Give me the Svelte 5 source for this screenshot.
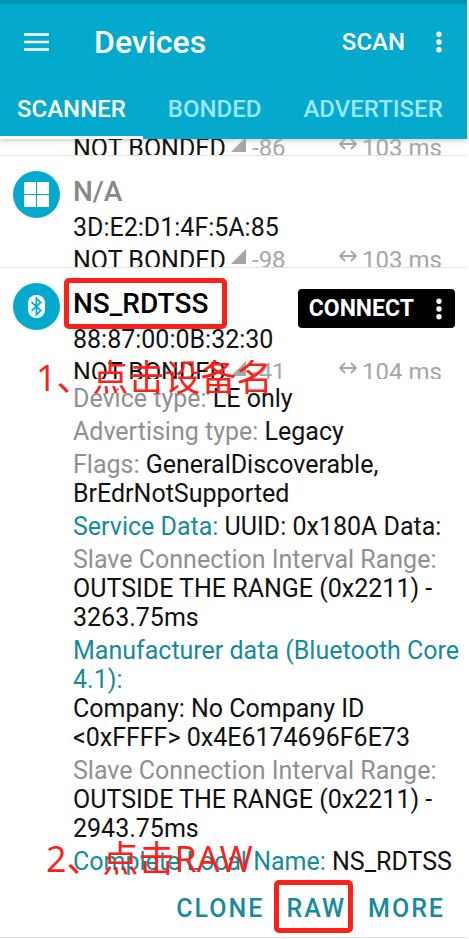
<script>
  const tabs = ['SCANNER', 'BONDED', 'ADVERTISER'];
  let activeTab = $state('SCANNER');

  const device = {
    name: 'NS_RDTSS',
    address: '88:87:00:0B:32:30',
    rssi: -41,
    interval: 104
  };

  const details = [
    { label: 'Device type:', value: 'LE only' },
    { label: 'Advertising type:', value: 'Legacy' },
    { label: 'Flags:', value: 'GeneralDiscoverable, BrEdrNotSupported' },
    { label: 'Service Data:', value: 'UUID: 0x180A Data:', link: true },
    { label: 'Slave Connection Interval Range:', value: 'OUTSIDE THE RANGE (0x2211) - 3263.75ms' },
    { label: 'Manufacturer data (Bluetooth Core 4.1):', value: 'Company: No Company ID <0xFFFF> 0x4E6174696F6E73', link: true, block: true },
    { label: 'Slave Connection Interval Range:', value: 'OUTSIDE THE RANGE (0x2211) - 2943.75ms' },
    { label: 'Complete Local Name:', value: 'NS_RDTSS', link: true }
  ];
</script>

{#snippet dots()}
  <svg class="dots" width="6" height="22" viewBox="0 0 6 22" aria-hidden="true">
    <circle cx="3" cy="3.2" r="2.7" />
    <circle cx="3" cy="11" r="2.7" />
    <circle cx="3" cy="18.8" r="2.7" />
  </svg>
{/snippet}

{#snippet meta(rssi, interval)}
  <div class="meta">
    <span>NOT BONDED</span>
    <span class="reading">
      <svg class="signal" width="16" height="16" viewBox="0 0 16 16" aria-hidden="true">
        <path d="M15 0v15H0z" />
      </svg>
      {rssi}
    </span>
    <span class="reading">
      <svg class="arrows" width="18" height="12" viewBox="0 0 18 12" aria-hidden="true">
        <path d="M1 6h16M6 1 1 6l5 5M12 1l5 5-5 5" />
      </svg>
      {interval} ms
    </span>
  </div>
{/snippet}

<div class="app">
  <header>
    <div class="toolbar">
      <button class="menu" aria-label="Open menu">
        <svg width="25" height="18" viewBox="0 0 25 18" aria-hidden="true">
          <path d="M0 1.5h25M0 9h25M0 16.5h25" />
        </svg>
      </button>
      <h1>Devices</h1>
      <button class="scan">SCAN</button>
      <button class="overflow" aria-label="More options">{@render dots()}</button>
    </div>
    <nav>
      {#each tabs as tab}
        <button class="tab" class:active={tab === activeTab} onclick={() => (activeTab = tab)}>{tab}</button>
      {/each}
    </nav>
  </header>

  <main>
    <section class="device scrolled">
      <div class="info">
        {@render meta(-86, 103)}
      </div>
    </section>

    <section class="device">
      <div class="avatar">
        <svg width="47" height="47" viewBox="0 0 47 47" aria-hidden="true">
          <path fill="#fff" d="M11 11h12v12H11zM24 11h12v12H24zM11 24h12v12H11zM24 24h12v12H24z" />
        </svg>
      </div>
      <div class="info">
        <h2 class="unknown">N/A</h2>
        <p class="address">3D:E2:D1:4F:5A:85</p>
        {@render meta(-98, 103)}
      </div>
    </section>

    <section class="device">
      <div class="avatar">
        <svg width="47" height="47" viewBox="0 0 47 47" aria-hidden="true">
          <rect x="15" y="12" width="17" height="23" rx="8" fill="#fff" />
          <path fill="none" stroke="#04a9ce" stroke-width="1.7" d="M18.5 19.2l9.2 8.4-4.3 4.2V15.2l4.3 4.2-9.2 8.4" />
        </svg>
      </div>
      <div class="info">
        <div class="title">
          <h2><span class="marked name-mark">{device.name}</span></h2>
          <button class="connect">CONNECT {@render dots()}</button>
        </div>
        <p class="address">{device.address}</p>
        {@render meta(device.rssi, device.interval)}
        <div class="details">
          {#each details as item}
            <p>
              <span class="label" class:link={item.link} class:block={item.block}>{item.label}</span>
              {item.value}
            </p>
          {/each}
        </div>
        <div class="actions">
          <button>CLONE</button>
          <button class="marked raw-mark">RAW</button>
          <button>MORE</button>
        </div>
      </div>
      <p class="note first">1、点击设备名</p>
      <p class="note second">2、点击RAW</p>
    </section>
  </main>
</div>

<style>
  :global(body) {
    margin: 0;
    background: #fff;
  }

  .app {
    padding-right: 2px;
    font-family: Roboto, "Noto Sans CJK SC", sans-serif;
    font-size: 25px;
    line-height: 29px;
    color: #111;
  }

  h1, h2, p {
    margin: 0;
    font-weight: 500;
  }

  button {
    border: 0;
    padding: 0;
    background: none;
    font: inherit;
    font-weight: 500;
    color: inherit;
    cursor: pointer;
  }

  svg {
    display: block;
  }

  header {
    position: relative;
    border-top: 4px solid #0092b3;
    background: #04a9ce;
    color: #fff;
    font-size: 24px;
    box-shadow: 0 2px 5px rgba(0, 0, 0, 0.2);
  }

  .toolbar {
    display: flex;
    align-items: center;
    height: 76px;
    padding: 0 25px 0 24px;
  }

  .menu path {
    stroke: #fff;
    stroke-width: 2.4;
  }

  h1 {
    flex: 1;
    margin-left: 45px;
    font-size: 32px;
    line-height: 38px;
  }

  .overflow {
    margin-left: 31px;
  }

  .dots {
    fill: #fff;
  }

  nav {
    display: flex;
    gap: 8px;
  }

  .tab {
    height: 59px;
    padding: 2px 17px 0;
    border-bottom: 3px solid transparent;
    color: #9be6fb;
  }

  .tab.active {
    border-color: #fff;
    color: #fff;
  }

  .device {
    position: relative;
    display: flex;
    gap: 13px;
    padding: 19px 7px 0 13px;
    border-bottom: 1px solid #e4e4e4;
  }

  /* row that is mostly hidden under the app bar */
  .scrolled {
    height: 16px;
    padding: 0 7px 0 73px;
    overflow: hidden;
    align-items: flex-end;
  }

  .avatar {
    flex: none;
    width: 47px;
    height: 47px;
    margin-top: -4px;
    border-radius: 50%;
    background: #04a9ce;
  }

  .info {
    flex: 1;
    min-width: 0;
  }

  h2 {
    font-size: 28px;
    line-height: 34px;
    color: #000;
  }

  .unknown {
    color: #888;
  }

  p {
    font-weight: 400;
  }

  .address {
    margin: 4px 0;
  }

  .title {
    display: flex;
    justify-content: space-between;
    align-items: flex-start;
    height: 34px;
    padding-right: 5px;
  }

  .connect {
    display: flex;
    align-items: center;
    gap: 22px;
    height: 39px;
    margin-top: 2px;
    padding: 0 13px 0 11px;
    border-radius: 4px;
    background: #000;
    color: #fff;
    font-size: 23px;
    font-weight: 700;
  }

  .meta {
    display: grid;
    grid-template-columns: 158px 108px 1fr;
    height: 21px;
    overflow: hidden;
  }

  .reading {
    display: flex;
    gap: 5px;
    font-size: 24px;
    color: #a6a6a6;
  }

  .signal {
    margin-top: 3px;
    fill: #a6a6a6;
  }

  .arrows {
    margin-top: 4px;
    fill: none;
    stroke: #a6a6a6;
    stroke-width: 1.8;
  }

  .details {
    display: grid;
    gap: 4px;
    margin-top: 5px;
  }

  .label {
    color: #909090;
  }

  .label.link {
    color: #158b9b;
  }

  .label.block {
    display: block;
  }

  .actions {
    display: flex;
    justify-content: flex-end;
    gap: 22px;
    padding: 18px 15px 14px 0;
    color: #158b9b;
  }

  .actions button {
    letter-spacing: 2px;
  }

  .marked {
    position: relative;
  }

  .marked::after {
    content: "";
    position: absolute;
    border: 5px solid #fb2018;
    border-radius: 5px;
  }

  .name-mark::after {
    inset: -9px -19px -9px -9px;
  }

  .raw-mark::after {
    inset: -14px -7px -10px -12px;
  }

  .note {
    position: absolute;
    font-family: "Open Sans", "Noto Sans CJK SC", sans-serif;
    font-size: 36px;
    line-height: 44px;
    color: #fb2018;
    white-space: nowrap;
    pointer-events: none;
  }

  .first {
    top: 88px;
    left: 36px;
  }

  .second {
    bottom: 56px;
    left: 46px;
  }
</style>
